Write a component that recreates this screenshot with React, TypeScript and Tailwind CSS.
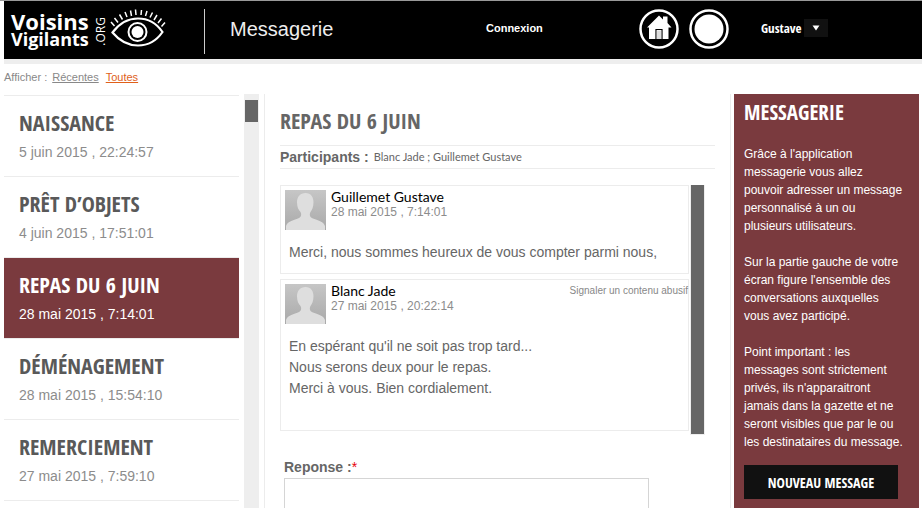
import React from "react";

const condensed =
  "font-['Open_Sans_Condensed','Roboto_Condensed','Liberation_Sans_Narrow','Open_Sans',sans-serif]";
const humanist = "font-['Open_Sans',sans-serif]";

const conversations = [
  { title: "NAISSANCE", date: "5 juin 2015 , 22:24:57", active: false },
  { title: "PRÊT D’OBJETS", date: "4 juin 2015 , 17:51:01", active: false },
  { title: "REPAS DU 6 JUIN", date: "28 mai 2015 , 7:14:01", active: true },
  { title: "DÉMÉNAGEMENT", date: "28 mai 2015 , 15:54:10", active: false },
  { title: "REMERCIEMENT", date: "27 mai 2015 , 7:59:10", active: false },
];

function EyeLogo() {
  return (
    <svg width="56" height="38" viewBox="0 0 56 38" fill="none" stroke="#fff" aria-hidden="true">
      <path d="M2.5 23.5C10 13.500 18 9.500 28 9.500S46 13.500 52.500 23C46 32.500 38 36.500 28 36.500S10 32.500 2.500 23.500Z" strokeWidth="2.200" />
      <circle cx="27.500" cy="23" r="9" strokeWidth="2" />
      <circle cx="27.500" cy="23" r="6" fill="#fff" stroke="none" />
      <path
        d="M4.500 17L1 13M8 13.500L4.500 9M12.500 10.500L9.500 5.500M17 8L15 3M21.500 7L20.500 1.500M26 6L25.500 0.500M31 6L31.500 1M35.500 7L37 2M40 8.500L42.500 3.500M44 11L47 6M48 14L51.500 9.500M51.500 17.500L55 13.500"
        strokeWidth="1.500"
      />
    </svg>
  );
}

function HomeIcon() {
  return (
    <svg width="40" height="40" viewBox="0 0 40 40" aria-hidden="true">
      <circle cx="20" cy="20" r="18.500" fill="none" stroke="#fff" strokeWidth="2.500" />
      <path d="M8 18.500L20 6.500L24 10.500V7.500H28.500V14L32.500 18.500H29.500V30H10V18.500Z" fill="#fff" />
      <path d="M17 30V20.500H23V30" fill="none" stroke="#000" strokeWidth="1.200" />
      <path d="M17.800 30V21.500H22.200V30Z" fill="#ddd" />
    </svg>
  );
}

function Avatar() {
  return (
    <svg width="41" height="40" viewBox="0 0 41 40" className="shrink-0" aria-hidden="true">
      <defs>
        <linearGradient id="avatarShade" x1="0" y1="0" x2="0" y2="1">
          <stop offset="0" stopColor="#c6c6c6" />
          <stop offset="1" stopColor="#a9a9a9" />
        </linearGradient>
      </defs>
      <rect width="41" height="40" fill="url(#avatarShade)" />
      <path
        d="M20.500 3C26 3 28.500 7 28.500 12.500C28.500 17 27 20 25.500 22C24 25 25 27.500 28 28.500C34 31 38.500 31.500 40 36V40H1V36C2.500 31.500 7 31 13 28.500C16 27.500 17 25 15.500 22C13.500 20 12 17 12 12.500C12 7 15 3 20.500 3Z"
        fill="#dedede"
      />
    </svg>
  );
}

function Message({
  author,
  date,
  children,
  report,
  size,
}: {
  author: string;
  date: string;
  children: React.ReactNode;
  report?: boolean;
  size: string;
}) {
  return (
    <article className={`border border-[#ececec] pt-1 pl-1 ${size}`}>
      <header className="flex h-10 items-start gap-[5px]">
        <Avatar />
        <div className="flex-1">
          <h3 className="font-['Lato',sans-serif] text-[14px] leading-[14px] font-normal text-black">{author}</h3>
          <p className="text-[12px] leading-[16px] text-[#8c8c8c]">{date}</p>
        </div>
        {report && (
          <a href="#signaler" className="text-[10px] leading-[14px] text-[#888]">
            Signaler un contenu abusif
          </a>
        )}
      </header>
      <p className="mt-3 pl-1 text-[14px] leading-[21px] text-[#666]">{children}</p>
    </article>
  );
}

export default function App() {
  return (
    <div className="flex h-screen flex-col overflow-hidden border-t border-[#999] bg-white pl-1 font-['Liberation_Sans',Arial,sans-serif]">
      <header className="flex h-[63px] shrink-0 items-start border-b-[5px] border-[#eee] bg-black text-white">
        <a href="#accueil" className="flex w-[200px] shrink-0 items-start pt-2 pl-[7px]" aria-label="Voisins Vigilants">
          <span className={`${humanist} w-[81px] pt-[3px] font-bold`}>
            <span className="block text-[22px] leading-[18px]">Voisins</span>
            <span className="block text-[18px] leading-[18px]">Vigilants</span>
          </span>
          <span className={`${humanist} mt-2 w-[18px] rotate-180 text-[12px] leading-[18px] [writing-mode:vertical-rl]`}>
            .ORG
          </span>
          <EyeLogo />
        </a>
        <div className="mt-2 h-[45px] w-px bg-[#ccc]" />
        <h1 className="ml-[25px] w-[256px] pt-4 text-[20px] leading-[24px] text-[#eee]">Messagerie</h1>
        <a href="#connexion" className="pt-5 text-[11px] leading-[14px] font-bold">
          Connexion
        </a>
        <div className="ml-auto flex gap-[10px] pt-2">
          <a href="#maison" aria-label="Accueil">
            <HomeIcon />
          </a>
          <a href="#profil" aria-label="Profil">
            <svg width="40" height="40" viewBox="0 0 40 40" aria-hidden="true">
              <circle cx="20" cy="20" r="18.500" fill="none" stroke="#fff" strokeWidth="2.500" />
              <circle cx="20" cy="20" r="14.500" fill="#fff" />
            </svg>
          </a>
        </div>
        <div className="relative mt-[18px] mr-[94px] ml-8">
          <select
            aria-label="Compte"
            className={`${condensed} block h-[18px] w-[67px] appearance-none bg-black text-[13px] leading-[18px] font-bold`}
          >
            <option>Gustave</option>
          </select>
          <span className="pointer-events-none absolute top-0 right-0 flex h-[18px] w-6 items-center justify-center bg-[#111]">
            <svg width="8" height="6" viewBox="0 0 8 6" aria-hidden="true">
              <path d="M0.500 0.500H7.500L4 5.500Z" fill="#fff" />
            </svg>
          </span>
        </div>
      </header>

      <nav className="flex h-[30px] shrink-0 gap-[5px] pt-[6px] text-[11px] leading-[14px] text-[#888]">
        <span>Afficher :</span>
        <a href="#recentes" className="underline">
          Récentes
        </a>
        <a href="#toutes" className="ml-[2px] text-[#e0601a] underline">
          Toutes
        </a>
      </nav>

      <main className="flex min-h-0 flex-1 pr-[3px]">
        <ul className="mt-px w-[235px] shrink-0 border-t border-[#ececec]">
          {conversations.map((c) => (
            <li key={c.title} className="border-b border-[#ececec]">
              <button
                type="button"
                className={`flex h-20 w-full flex-col pt-[10px] pl-[15px] text-left ${
                  c.active ? "bg-[#7a3a3e] text-white" : "text-[#595959]"
                }`}
              >
                <span className={`${condensed} text-[22px] leading-[32px] font-bold`}>{c.title}</span>
                <span className={`pt-1 text-[14px] leading-[20px] ${c.active ? "text-white" : "text-[#8c8c8c]"}`}>
                  {c.date}
                </span>
              </button>
            </li>
          ))}
        </ul>

        <div className="mr-[5px] ml-[5px] w-[15px] shrink-0 bg-[#eee] px-px pt-[6px]">
          <div className="h-[22px] bg-[#666]" />
        </div>

        <section className="mr-[3px] min-w-0 flex-1 border-x border-[#ececec] pr-[15px] pl-[15px]">
          <h2 className={`${condensed} pt-3 pb-[11px] text-[22px] leading-[28px] font-bold text-[#666]`}>
            REPAS DU 6 JUIN
          </h2>
          <p className="flex h-6 items-center gap-[5px] border-y border-[#ececec] text-[#666]">
            <b className="text-[14px] leading-[18px]">Participants :</b>
            <span className="font-['Lato',sans-serif] text-[11px] leading-[18px]">Blanc Jade ; Guillemet Gustave</span>
          </p>

          <div className="mt-4 mr-[10px] flex gap-px">
            <div className="flex min-w-0 flex-1 flex-col gap-[5px]">
              <Message author="Guillemet Gustave" date="28 mai 2015 , 7:14:01" size="h-[89px]">
                Merci, nous sommes heureux de vous compter parmi nous,
              </Message>
              <Message author="Blanc Jade" date="27 mai 2015 , 20:22:14" report size="h-[152px]">
                En espérant qu'il ne soit pas trop tard...
                <br />
                Nous serons deux pour le repas.
                <br />
                Merci à vous. Bien cordialement.
              </Message>
            </div>
            <div className="h-[250px] w-[15px] shrink-0 border-x border-b border-[#eee] bg-[#666]" />
          </div>

          <form className="mt-[23px] mr-[66px] ml-1">
            <label htmlFor="reponse" className="block text-[14px] leading-[18px] font-bold text-[#666]">
              Reponse :<span className="font-normal text-red-600">*</span>
            </label>
            <textarea id="reponse" className="mt-[2px] block h-24 w-full resize-none border border-[#d5d5d5]" />
          </form>
        </section>

        <aside className="w-[185px] shrink-0 bg-[#7a3a3e] px-[10px] pt-1 text-white">
          <h2 className={`${condensed} text-[21px] leading-[28px] font-bold`}>MESSAGERIE</h2>
          <div className="mt-[19px] flex flex-col gap-[18px] text-[12px] leading-[18px] whitespace-nowrap">
            <p>
              Grâce à l'application
              <br />
              messagerie vous allez
              <br />
              pouvoir adresser un message
              <br />
              personnalisé à un ou
              <br />
              plusieurs utilisateurs.
            </p>
            <p>
              Sur la partie gauche de votre
              <br />
              écran figure l'ensemble des
              <br />
              conversations auxquelles
              <br />
              vous avez participé.
            </p>
            <p>
              Point important : les
              <br />
              messages sont strictement
              <br />
              privés, ils n'apparaitront
              <br />
              jamais dans la gazette et ne
              <br />
              seront visibles que par le ou
              <br />
              les destinataires du message.
            </p>
          </div>
          <button type="button" className={`${condensed} mt-[14px] h-[34px] w-[154px] bg-[#111] text-[14px] font-bold`}>
            NOUVEAU MESSAGE
          </button>
        </aside>
      </main>
    </div>
  );
}
